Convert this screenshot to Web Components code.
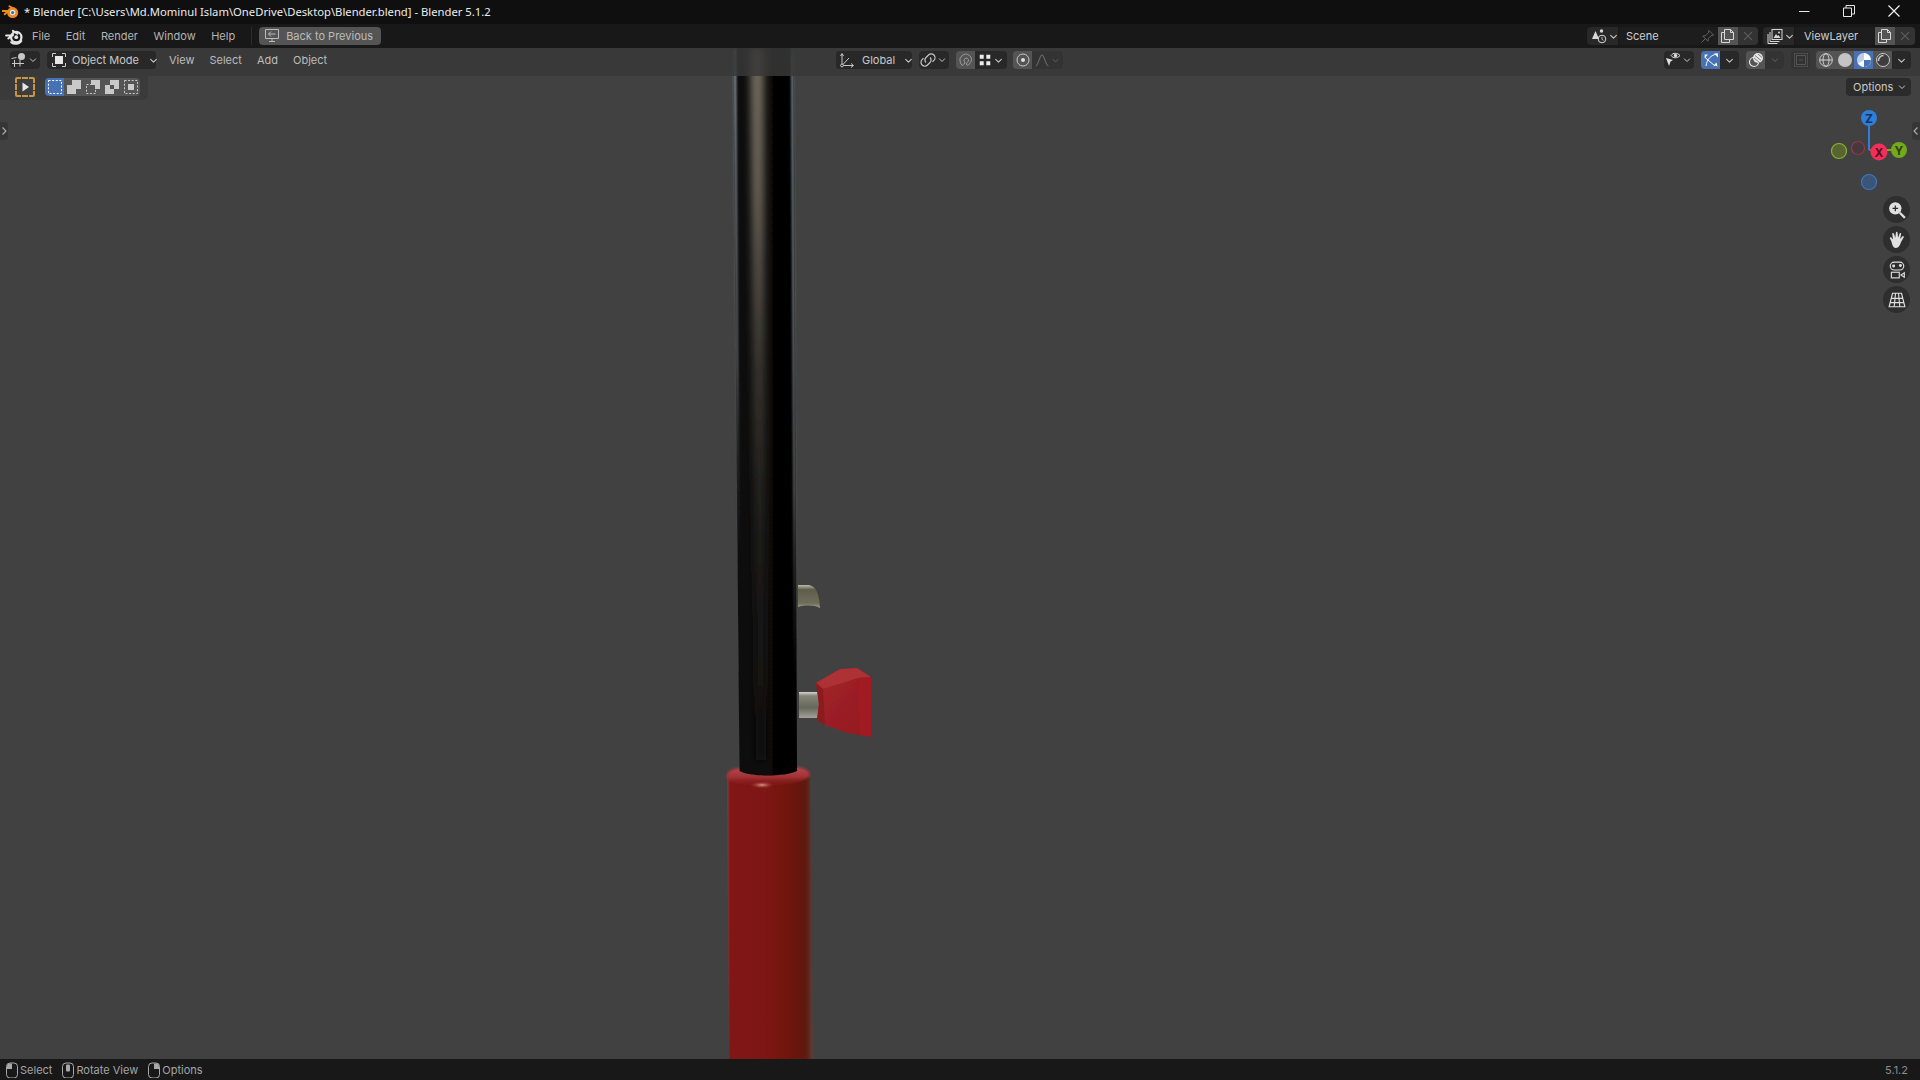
<!DOCTYPE html>
<html>
<head>
<meta charset="utf-8">
<title>Blender</title>
<style>
html, body { margin: 0; height: 100%; background: #181818; overflow: hidden; }
</style>
</head>
<body>
<bl-app>
  <bl-titlebar slot="title">* Blender [C:\Users\Md.Mominul Islam\OneDrive\Desktop\Blender.blend] - Blender 5.1.2</bl-titlebar>
  <bl-topbar slot="top"></bl-topbar>
  <bl-viewport slot="view"></bl-viewport>
  <bl-statusbar slot="status"></bl-statusbar>
</bl-app>
<script>
const chev = '<path d="M4.500 6.500 8 10l3.500-3.500" fill="none" stroke="currentColor" stroke-width="1.300" stroke-linecap="round" stroke-linejoin="round"/>';
const ICONS = {
  chev,
  logo: '<circle cx="10" cy="9" r="4.600" fill="none" stroke="currentColor" stroke-width="2"/><circle cx="10" cy="9" r="1.700" fill="currentColor"/><path d="M1 7.500h6M3 10.200l4-3.400M7 3.500l4 2.400M5.500 13.500c2 2 7 2.200 9-1" fill="none" stroke="currentColor" stroke-width="1.800" stroke-linecap="round"/>',
  logoOrange: '<circle cx="10" cy="9" r="5.200" fill="#f08a1d"/><circle cx="10" cy="9" r="2.600" fill="#e8e8e8"/><circle cx="10" cy="9" r="1.500" fill="#3a6ea8"/><path d="M.5 7.500h6M2.500 10.500l4-3.500M7 3l4 2.500" fill="none" stroke="#f08a1d" stroke-width="1.800" stroke-linecap="round"/>',
  back: '<path d="M1.500 1.500h13v9h-13zM8 10.500v3M5 13.500h6" fill="none" stroke="currentColor"/><path d="M11.500 6H4.500M7 3.500 4.500 6 7 8.500" fill="none" stroke="currentColor"/>',
  editor: '<path d="M1 11.500h12M3.500 8v7M9 7.500v7M.5 6.500l5-1" fill="none" stroke="currentColor"/><circle cx="10.500" cy="4.500" r="3.500" fill="currentColor"/>',
  mode: '<path d="M1.500 5V1.500H5M11 1.500h3.500V5M14.500 11v3.500H11M5 14.500H1.500V11" fill="none" stroke="currentColor"/><rect x="4" y="4" width="8" height="8" fill="#e6e6e6"/>',
  pointer: '<path d="M5.500 3.500v9L12 8z" fill="#e6e6e6"/>',
  orient: '<path d="M3 2v11.500M3 13.500 14 13.500M3 13.500 10 6" fill="none" stroke="currentColor"/><path d="M1.500 4 3 1.500 4.500 4M12 11.500l2.500 2-2.500 2" fill="none" stroke="currentColor"/><circle cx="3" cy="13.500" r="1.400" fill="#282828" stroke="currentColor"/>',
  link: '<path d="M6 10.500a3.400 3.400 0 0 1 0-5L8.500 3a3.800 3.800 0 0 1 5.400 5.400l-1.400 1.400M10 5.500a3.400 3.400 0 0 1 0 5L7.500 13a3.800 3.800 0 0 1-5.400-5.400l1.400-1.400" fill="none" stroke="currentColor" stroke-width="1.200"/>',
  magnet: '<path d="M4 13.500 2.500 11a6 6 0 0 1 9-7.500 5 5 0 0 1 1 7l-2.500 3-2-1.500 2.300-2.800A2.200 2.200 0 0 0 7 6.500a2.500 2.500 0 0 0-.6 3.300L7 11z" fill="none" stroke="#9a9a9a" stroke-width="1"/>',
  grid: '<path d="M2 2h4.500v4.500H2zM9.500 2H14v4.500H9.500zM2 9.500h4.500V14H2zM9.500 9.500H14V14H9.500z" fill="currentColor"/>',
  prop: '<circle cx="8" cy="8" r="6" fill="none" stroke="#c8c8c8"/><circle cx="8" cy="8" r="2" fill="#e0e0e0"/>',
  falloff: '<path d="M1.500 14c3 0 4-11 6.500-11s3.500 11 6.500 11" fill="none" stroke="#6a6a6a" stroke-width="1.100"/>',
  sceneIcon: '<path d="M1 11 4.500 3 8 11z" fill="#d8d8d8"/><circle cx="10.500" cy="3" r="1.700" fill="#d8d8d8"/><circle cx="11" cy="11" r="3.800" fill="#2a2a2a" stroke="#d8d8d8"/><path d="M11 9v2.300l1.500 1" fill="none" stroke="#d8d8d8" stroke-width=".8"/>',
  pin: '<path d="M9.500 1.500l5 5-2.500.5-3 3-.5 3L3 7.500l3-.5 3-3zM5.500 10.500 1.500 14.500" fill="none" stroke="#666" />',
  copy: '<path d="M4.500 4.500H1.500v10h8v-3M4.500 1.500h6l3 3v7h-9z" fill="none" stroke="#d8d8d8"/><path d="M10.500 1.500v3h3" fill="none" stroke="#d8d8d8"/>',
  x: '<path d="M3.500 3.500l9 9M12.500 3.500l-9 9" fill="none" stroke="#5e5e5e" stroke-width="1.300"/>',
  layers: '<rect x="5" y="1.500" width="10" height="10" fill="#2a2a2a" stroke="#d8d8d8"/><path d="M3 4v9.500h9.500M1 6v9.500h9.500" fill="none" stroke="#d8d8d8"/><path d="M6.500 10 9 6l1.500 2 1-1 2 3z" fill="#d8d8d8"/><circle cx="12" cy="4.500" r="1" fill="#d8d8d8"/>',
  eye: '<path d="M6 3.500C8 .5 12.500 .5 15 3.500 12.500 6.500 8 6.500 6 3.500z" fill="none" stroke="#e0e0e0"/><circle cx="10.500" cy="3.500" r="1.700" fill="#e0e0e0"/><path d="M1 6l7 2-2.500 1.500L4 14z" fill="#e0e0e0"/>',
  gizmoView: '<path d="M3 14C4 7 8 3 14 2" fill="none" stroke="#fff" stroke-width="1"/><path d="M1.500 5 12 14" fill="none" stroke="#fff"/><path d="M1.500 2.500 5 2.500 2 6zM14.500 14.500l-1-4-2.500 2.500z M11 1.500h4v4z" fill="#fff"/>',
  overlay: '<circle cx="6" cy="10" r="4.500" fill="none" stroke="#e6e6e6" stroke-width="1.200"/><circle cx="10" cy="6" r="5" fill="#e6e6e6"/><path d="M7 3.500l6 5M6 6l6 5M10 2l4 3.500" stroke="#666" stroke-width=".8"/>',
  xray: '<rect x="3.500" y="3.500" width="9" height="9" fill="none" stroke="#555"/><rect x="1.500" y="1.500" width="13" height="13" fill="none" stroke="#4c4c4c"/><path d="M6 8h4" stroke="#555"/>',
  wire: '<circle cx="8" cy="8" r="6.300" fill="none" stroke="#d0d0d0"/><ellipse cx="8" cy="8" rx="3" ry="6.300" fill="none" stroke="#d0d0d0"/><path d="M1.700 8h12.600" stroke="#d0d0d0"/>',
  solid: '<circle cx="8" cy="8" r="7" fill="#c4c4c4"/>',
  matprev: '<circle cx="8" cy="8" r="7" fill="#fff"/><path d="M8 8v7a7 7 0 0 0 6-3.500zM8 8l6 3.500A7 7 0 0 0 15 8z" fill="#4772b3"/><path d="M8 1a7 7 0 0 0-6 10.500L8 8z" fill="#4772b3" opacity=".35"/>',
  rendered: '<circle cx="8" cy="8" r="6.500" fill="#3d3d3d" stroke="#c8c8c8"/><path d="M3.500 9a5 5 0 0 1 5-5.500" fill="none" stroke="#c8c8c8" stroke-width="1.500"/>',
  zoom: '<circle cx="6.500" cy="6.500" r="5.500" fill="#e0e0e0"/><path d="M10.500 10.500l4.500 4.500" stroke="#e0e0e0" stroke-width="2"/><path d="M4 6.500h5M6.500 4v5" stroke="#2b2b2b" stroke-width="1.100"/>',
  hand: '<path d="M3 9 1.800 6.800c-.6-1 .6-1.700 1.300-.9L4.500 7.500 3.800 2.800c-.2-1.100 1.200-1.300 1.500-.3L6.500 6 7 1.500c.1-1 1.500-1 1.500 0L9 6l1.300-3.700c.3-1 1.700-.6 1.400.4L10.700 7l2-2.200c.7-.8 1.800.1 1.200 1L11.500 10c-1 3-2 5-4.500 5S3.700 12 3 9z" fill="#e0e0e0"/>',
  camera: '<rect x="2" y="1" width="12" height="7" rx="3.500" fill="none" stroke="#e0e0e0"/><circle cx="5" cy="4.500" r="1.300" fill="#e0e0e0"/><circle cx="11" cy="4" r="1.300" fill="#e0e0e0"/><rect x="3" y="10" width="7" height="5" fill="none" stroke="#e0e0e0"/><path d="M14.500 10.500v4L11.500 12.500z" fill="none" stroke="#e0e0e0"/>',
  persp: '<path d="M4 2h8l3 12H1zM6.700 2 5.500 14M9.300 2l1.200 12M3 6.500h10M2 10.300h12" fill="none" stroke="#e0e0e0"/>',
  mouseL: '<rect x="2.500" y="1" width="11" height="15" rx="3.500" fill="none" stroke="#a8a8a8"/><path d="M3 4.500A3 3 0 0 1 6 1.500h2V7H3z" fill="#a8a8a8"/>',
  mouseM: '<rect x="2.500" y="1" width="11" height="15" rx="3.500" fill="none" stroke="#a8a8a8"/><rect x="6" y="2.500" width="4" height="7" rx="1" fill="#a8a8a8"/>',
  mouseR: '<rect x="2.500" y="1" width="11" height="15" rx="3.500" fill="none" stroke="#a8a8a8"/><path d="M13 4.500a3 3 0 0 0-3-3H8V7h5z" fill="#a8a8a8"/>',
  selSet: '<rect x="1.500" y="1.500" width="13" height="13" fill="#4772b3" stroke="#fff" stroke-dasharray="2 1.600"/>',
  selExt: '<path d="M6 1h9v9h-5v5H1V6h5z" fill="#c9c9c9"/>',
  selSub: '<rect x="1.500" y="5.500" width="9" height="9" fill="none" stroke="#c9c9c9" stroke-dasharray="2 1.600"/><path d="M6 1h9v9h-5V6H6z" fill="#c9c9c9"/>',
  selDiff: '<path d="M6 1h9v9h-5V6H6zM1 6h5v4h4v5H1z" fill="#c9c9c9"/>',
  selAnd: '<rect x="1.500" y="1.500" width="13" height="13" fill="none" stroke="#c9c9c9" stroke-dasharray="2 1.600"/><rect x="5" y="5" width="6" height="6" fill="#c9c9c9"/>'
};

// small helper so each element has its own shadow root and style
function shadow(el, html) {
  el.attachShadow({mode: 'open'}).innerHTML = html;
}

class BlIcon extends HTMLElement {
  connectedCallback() {
    const s = this.getAttribute('size') || 16;
    shadow(this, `<style>:host{display:inline-flex;flex:none;line-height:0}</style>
      <svg width="${s}" height="${s}" viewBox="0 0 16 16">${ICONS[this.getAttribute('name')] || ''}</svg>`);
  }
}
customElements.define('bl-icon', BlIcon);

// rounded control, tone picks the fill
class BlSeg extends HTMLElement {
  constructor() {
    super();
    shadow(this, `<style>
      :host { display:inline-flex; align-items:center; height:18px; box-sizing:border-box; flex:none; border-radius:4px;
        background:#282828; color:#c8c8c8; font:11px Inter, "Liberation Sans", sans-serif; }
      :host([tone=mid]) { background:#545454; }
      :host([tone=flat]) { background:#393939; }
      :host([tone=blue]) { background:#4772b3; color:#fff; }
      :host([tone=dim]) { background:#333; color:#666; }
      :host([l]) { border-radius:4px 0 0 4px; }
      :host([r]) { border-radius:0 4px 4px 0; }
      :host([m]) { border-radius:0; }
    </style><slot></slot>`);
  }
}
customElements.define('bl-seg', BlSeg);

class BlTitlebar extends HTMLElement {
  constructor() {
    super();
    shadow(this, `<style>
      :host { display:flex; align-items:center; height:24px; padding-bottom:2px; box-sizing:border-box; background:#0f0f0f; color:#ececec;
        font:11.250px "Noto Sans", "Open Sans", sans-serif; white-space:nowrap; }
      .ic { margin:0 5px 0 2px; }
      .win { margin-left:auto; display:flex; align-items:center; }
      .win svg { display:block; }
      .win span { display:flex; width:45px; justify-content:center; }
    </style>
    <bl-icon class="ic" name="logoOrange" size="17"></bl-icon><slot></slot>
    <div class="win">
      <span><svg width="12" height="12"><path d="M1 6.500h10.500" stroke="#e8e8e8"/></svg></span>
      <span><svg width="12" height="12"><path d="M.5 3h8v8.500h-8zM3 3V.5h8.500V9H8.500" fill="none" stroke="#e8e8e8"/></svg></span>
      <span style="margin-right:4px"><svg width="12" height="12"><path d="M.5 .5l11 11M11.500 .5l-11 11" stroke="#f0f0f0" stroke-width="1.200"/></svg></span>
    </div>`);
  }
}
customElements.define('bl-titlebar', BlTitlebar);

class BlTopbar extends HTMLElement {
  constructor() {
    super();
    shadow(this, `<style>
      :host { display:flex; align-items:center; height:24px; background:#181818; color:#b4b4b4;
        font:11px Inter, "Liberation Sans", sans-serif; white-space:nowrap; }
      .logo { margin:0 9px 0 5px; color:#e6e6e6; }
      .menu { display:flex; gap:15.500px; }
      .sep { width:1px; height:18px; background:#2c2c2c; margin:0 7px 0 16px; }
      .back { padding:0 9px 0 5px; gap:6px; width:122px; box-sizing:border-box; color:#bcbcbc; }
      .right { margin-left:auto; display:flex; margin-right:5px; }
      .txt { padding-left:7px; box-sizing:border-box; justify-content:space-between; }
      .ico { padding-left:4px; box-sizing:border-box; }
      .ctr { justify-content:center; }
    </style>
    <bl-icon class="logo" name="logo" size="18"></bl-icon>
    <div class="menu"><span>File</span><span>Edit</span><span>Render</span><span>Window</span><span>Help</span></div>
    <div class="sep"></div>
    <bl-seg class="back" tone="mid"><bl-icon name="back"></bl-icon><span>Back to Previous</span></bl-seg>
    <div class="right">
      <bl-seg l class="ico" style="width:31px"><bl-icon name="sceneIcon" size="16"></bl-icon><bl-icon name="chev" size="13"></bl-icon></bl-seg>
      <bl-seg m class="txt" style="width:99px;background:#1d1d1d;margin-left:1px;color:#cfcfcf"><span>Scene</span><bl-icon name="pin" size="15" style="margin-right:3px"></bl-icon></bl-seg>
      <bl-seg m tone="mid" class="ctr" style="width:20px"><bl-icon name="copy"></bl-icon></bl-seg>
      <bl-seg r class="ctr" style="width:20px;background:#333;margin-right:5px"><bl-icon name="x" size="14"></bl-icon></bl-seg>
      <bl-seg l class="ico" style="width:31px"><bl-icon name="layers"></bl-icon><bl-icon name="chev" size="13"></bl-icon></bl-seg>
      <bl-seg m class="txt" style="width:80px;background:#1d1d1d;margin-left:1px;color:#cfcfcf;padding-left:9px"><span>ViewLayer</span></bl-seg>
      <bl-seg m tone="mid" class="ctr" style="width:20px"><bl-icon name="copy"></bl-icon></bl-seg>
      <bl-seg r class="ctr" style="width:20px;background:#333"><bl-icon name="x" size="14"></bl-icon></bl-seg>
    </div>`);
  }
}
customElements.define('bl-topbar', BlTopbar);

class BlHeader extends HTMLElement {
  constructor() {
    super();
    shadow(this, `<style>
      :host { display:flex; align-items:center; height:28px; box-sizing:border-box; padding:0 9px 4px 10px;
        background:rgba(56,56,56,.86); color:#bcbcbc; font:11px Inter, "Liberation Sans", sans-serif; white-space:nowrap; }
      .left { flex:0 0 826px; display:flex; align-items:center; }
      .menu { display:flex; gap:15px; margin-left:13px; }
      .mid { display:flex; align-items:center; }
      .right { margin-left:auto; display:flex; align-items:center; }
      .ctr { justify-content:center; }
    </style>
    <div class="left">
      <bl-seg class="ctr" style="width:30px"><bl-icon name="editor"></bl-icon><bl-icon name="chev" size="12"></bl-icon></bl-seg>
      <bl-seg style="width:109px;margin-left:7px;padding-left:4px;box-sizing:border-box">
        <bl-icon name="mode"></bl-icon><span style="margin:0 8px 0 5px">Object Mode</span><bl-icon name="chev" size="13"></bl-icon></bl-seg>
      <div class="menu"><span>View</span><span>Select</span><span>Add</span><span>Object</span></div>
    </div>
    <div class="mid">
      <bl-seg style="width:76px;padding-left:3px;box-sizing:border-box"><bl-icon name="orient"></bl-icon><span style="margin:0 7px 0 7px">Global</span><bl-icon name="chev" size="13"></bl-icon></bl-seg>
      <bl-seg class="ctr" style="width:30px;margin-left:7px"><bl-icon name="link"></bl-icon><bl-icon name="chev" size="12"></bl-icon></bl-seg>
      <bl-seg l tone="mid" class="ctr" style="width:19px;margin-left:7px"><bl-icon name="magnet"></bl-icon></bl-seg>
      <bl-seg r class="ctr" style="width:32px"><bl-icon name="grid" size="14" style="color:#eee"></bl-icon><bl-icon name="chev" size="13"></bl-icon></bl-seg>
      <bl-seg l tone="mid" class="ctr" style="width:19px;margin-left:6px"><bl-icon name="prop"></bl-icon></bl-seg>
      <bl-seg r tone="dim" class="ctr" style="width:31px"><bl-icon name="falloff"></bl-icon><bl-icon name="chev" size="11"></bl-icon></bl-seg>
    </div>
    <div class="right">
      <bl-seg class="ctr" style="width:30px"><bl-icon name="eye"></bl-icon><bl-icon name="chev" size="12"></bl-icon></bl-seg>
      <bl-seg l tone="blue" class="ctr" style="width:19px;margin-left:7px"><bl-icon name="gizmoView"></bl-icon></bl-seg>
      <bl-seg r class="ctr" style="width:19px"><bl-icon name="chev" size="13"></bl-icon></bl-seg>
      <bl-seg l tone="mid" class="ctr" style="width:19px;margin-left:7px"><bl-icon name="overlay"></bl-icon></bl-seg>
      <bl-seg r tone="dim" class="ctr" style="width:19px"><bl-icon name="chev" size="12"></bl-icon></bl-seg>
      <bl-seg tone="dim" class="ctr" style="width:19px;margin-left:7px"><bl-icon name="xray"></bl-icon></bl-seg>
      <bl-seg l tone="mid" class="ctr" style="width:19px;margin-left:6px"><bl-icon name="wire"></bl-icon></bl-seg>
      <bl-seg m tone="mid" class="ctr" style="width:19px"><bl-icon name="solid"></bl-icon></bl-seg>
      <bl-seg m tone="blue" class="ctr" style="width:19px"><bl-icon name="matprev"></bl-icon></bl-seg>
      <bl-seg m tone="mid" class="ctr" style="width:19px"><bl-icon name="rendered"></bl-icon></bl-seg>
      <bl-seg r class="ctr" style="width:19px"><bl-icon name="chev" size="13"></bl-icon></bl-seg>
    </div>`);
  }
}
customElements.define('bl-header', BlHeader);

class BlToolrow extends HTMLElement {
  constructor() {
    super();
    shadow(this, `<style>
      :host { display:flex; align-items:flex-start; height:24px; color:#d0d0d0; font:11px Inter, "Liberation Sans", sans-serif; }
      .panel { display:flex; align-items:center; width:148px; height:24px; box-sizing:border-box; padding:0 0 2px 15px;
        background:#3a3a3a; border-radius:0 0 5px 0; }
      .tool { display:flex; align-items:center; justify-content:center; width:20px; height:20px; box-sizing:border-box;
        border:2px dashed #c9953f; border-radius:2px; background:#3d3d3d; margin-right:10px; }
      .ctr { justify-content:center; }
      .opt { margin:2px 9px 0 auto; width:65px; padding-left:7px; box-sizing:border-box; gap:3px; }
    </style>
    <div class="panel">
      <div class="tool"><bl-icon name="pointer" size="16"></bl-icon></div>
      <bl-seg l tone="blue" class="ctr" style="width:19px"><bl-icon name="selSet"></bl-icon></bl-seg>
      <bl-seg m tone="mid" class="ctr" style="width:19px"><bl-icon name="selExt"></bl-icon></bl-seg>
      <bl-seg m tone="mid" class="ctr" style="width:19px"><bl-icon name="selSub"></bl-icon></bl-seg>
      <bl-seg m tone="mid" class="ctr" style="width:19px"><bl-icon name="selDiff"></bl-icon></bl-seg>
      <bl-seg r tone="mid" class="ctr" style="width:19px"><bl-icon name="selAnd"></bl-icon></bl-seg>
    </div>
    <bl-seg class="opt" tone="flat" style="background:#2b2b2b"><span>Options</span><bl-icon name="chev" size="12"></bl-icon></bl-seg>`);
  }
}
customElements.define('bl-toolrow', BlToolrow);

// the 3D object, drawn on the free canvas of the viewport
class BlScene extends HTMLElement {
  constructor() {
    super();
    shadow(this, `<style>:host{position:absolute;inset:0;display:block} svg{display:block}</style>
    <svg width="1920" height="1011" viewBox="0 48 1920 1011">
      <defs>
        <linearGradient id="shaft" x1="0" x2="1" y1="0" y2="0">
          <stop offset="0" stop-color="#121212"/><stop offset=".45" stop-color="#0d0c0b"/><stop offset=".75" stop-color="#020202"/><stop offset="1" stop-color="#030303"/>
        </linearGradient>
        <linearGradient id="fade" gradientUnits="userSpaceOnUse" x1="0" x2="0" y1="48" y2="760">
          <stop offset="0" stop-color="#6f685c"/><stop offset=".2" stop-color="#615b51"/><stop offset=".45" stop-color="#37332e"/><stop offset=".7" stop-color="#1d1b18"/><stop offset="1" stop-color="#0e0d0c"/>
        </linearGradient>
        <linearGradient id="edgeL" gradientUnits="userSpaceOnUse" x1="0" x2="0" y1="48" y2="560">
          <stop offset="0" stop-color="#8d97a4"/><stop offset=".3" stop-color="#6d747c"/><stop offset=".62" stop-color="#5a5d60"/><stop offset="1" stop-color="#414141" stop-opacity="0"/>
        </linearGradient>
        <linearGradient id="edgeR" gradientUnits="userSpaceOnUse" x1="0" x2="0" y1="48" y2="680">
          <stop offset="0" stop-color="#76868f"/><stop offset=".4" stop-color="#6c7278"/><stop offset=".7" stop-color="#595c5c"/><stop offset="1" stop-color="#414141" stop-opacity="0"/>
        </linearGradient>
        <linearGradient id="tube" x1="0" x2="1" y1="0" y2="0">
          <stop offset="0" stop-color="#714040"/><stop offset=".04" stop-color="#801616"/><stop offset=".4" stop-color="#7f1312"/>
          <stop offset=".62" stop-color="#751511"/><stop offset=".92" stop-color="#5e1a10"/><stop offset="1" stop-color="#5a4038"/>
        </linearGradient>
        <linearGradient id="rim" x1="0" x2="0" y1="0" y2="1">
          <stop offset="0" stop-color="#b04a50"/><stop offset=".5" stop-color="#a53338"/><stop offset="1" stop-color="#851616" stop-opacity="0"/>
        </linearGradient>
        <linearGradient id="pin" x1="0" x2="0" y1="0" y2="1">
          <stop offset="0" stop-color="#d4d4ce"/><stop offset=".15" stop-color="#85857a"/><stop offset=".6" stop-color="#66675b"/><stop offset="1" stop-color="#a2a298"/>
        </linearGradient>
        <linearGradient id="hook" x1="0" x2="0" y1="0" y2="1">
          <stop offset="0" stop-color="#bdb9ac"/><stop offset=".2" stop-color="#5f5d4c"/><stop offset=".8" stop-color="#6e6e5a"/><stop offset="1" stop-color="#a8a894"/>
        </linearGradient>
        <linearGradient id="block" x1="0" x2="1" y1="0" y2="1">
          <stop offset="0" stop-color="#a2232a"/><stop offset="1" stop-color="#931b20"/>
        </linearGradient>
        <radialGradient id="spec" cx=".5" cy=".5" r=".5">
          <stop offset="0" stop-color="#dc9a80"/><stop offset="1" stop-color="#a03030" stop-opacity="0"/>
        </radialGradient>
        <filter id="b1" x="-100%" y="-5%" width="300%" height="110%"><feGaussianBlur stdDeviation=".9"/></filter>
        <filter id="b3" x="-100%" y="-5%" width="300%" height="110%"><feGaussianBlur stdDeviation="3.500"/></filter>
        <filter id="b05" x="-5%" y="-5%" width="110%" height="110%"><feGaussianBlur stdDeviation=".6"/></filter>
      </defs>
      <path d="M727 776C727 771 732 769 738 768L798 767C806 768 810 771 810 776L813 1059H729z" fill="url(#tube)" filter="url(#b05)"/>
      <path d="M727 776C727 771 732 769 738 768L798 767C806 768 810 771 810 776C796 788 745 790 727 780z" fill="url(#rim)" filter="url(#b1)"/>
      <ellipse cx="762" cy="785" rx="12" ry="3.500" fill="url(#spec)"/>
      <path d="M733 48H794L797 771C785 777 750 777 739.500 771z" fill="url(#shaft)" filter="url(#b05)"/>
      <polygon points="750,48 764,48 766,760 756,760" fill="url(#fade)" filter="url(#b3)"/>
      <polygon points="733.500,48 736,48 739.500,560 737.500,560" fill="url(#edgeL)" filter="url(#b1)"/>
      <polygon points="791,48 793.500,48 796.500,680 794,680" fill="url(#edgeR)" filter="url(#b1)"/>
      <path d="M798 585h9c8 0 12 6 13 23-6-3-14-3-22-1z" fill="url(#hook)" filter="url(#b05)"/>
      <rect x="799" y="692" width="25" height="26" fill="url(#pin)" filter="url(#b05)"/>
      <path d="M816 683 840 669 857 668 871 677 871 737 847 733 825 725 817 720 819 704z" fill="url(#block)" filter="url(#b05)"/>
      <path d="M816 683 840 669 857 668 871 677 858 678 823 689z" fill="#ad3036" filter="url(#b05)"/>
      <path d="M858 678 871 677 871 737 860 735z" fill="#a11b20" filter="url(#b05)"/>
      <path d="M816 683 823 689 825 725 817 720 819 704z" fill="#8c1a1e" filter="url(#b05)"/>
    </svg>`);
  }
}
customElements.define('bl-scene', BlScene);

class BlGizmo extends HTMLElement {
  constructor() {
    super();
    shadow(this, `<style>:host{position:absolute;left:1820px;top:50px;display:block} svg{display:block}
      text{font:bold 12px Inter,"Liberation Sans",sans-serif;text-anchor:middle}</style>
    <svg width="100" height="100" viewBox="1820 98 100 100">
      <circle cx="1869" cy="182" r="7.500" fill="#3a5578" stroke="#3c78c0" stroke-width="1.200"/>
      <circle cx="1839" cy="151" r="7.500" fill="#58652f" stroke="#8ab32f" stroke-width="1.200"/>
      <circle cx="1858" cy="148" r="6.500" fill="#47383c" stroke="#93394f" stroke-width="1.200"/>
      <path d="M1869 118v32" stroke="#2f7fd8" stroke-width="2"/>
      <path d="M1869 150h10" stroke="#ef3158" stroke-width="2"/>
      <path d="M1879 150h20" stroke="#74a81d" stroke-width="2"/>
      <circle cx="1869" cy="118" r="8" fill="#2f7fd8"/><text x="1869" y="122.500" fill="#12325a">Z</text>
      <circle cx="1899" cy="150" r="8" fill="#74a81d"/><text x="1899" y="154.500" fill="#2c4208">Y</text>
      <circle cx="1879" cy="152" r="8.500" fill="#f02f5a"/><text x="1879" y="156.500" fill="#5c0d20">X</text>
    </svg>`);
  }
}
customElements.define('bl-gizmo', BlGizmo);

class BlNav extends HTMLElement {
  constructor() {
    super();
    shadow(this, `<style>
      :host { position:absolute; left:1883px; top:148px; display:flex; flex-direction:column; gap:3px; }
      .b { display:flex; width:27px; height:27px; border-radius:50%; background:#2e2e2e; align-items:center; justify-content:center; }
    </style>
    <div class="b"><bl-icon name="zoom" size="18"></bl-icon></div>
    <div class="b"><bl-icon name="hand" size="18"></bl-icon></div>
    <div class="b"><bl-icon name="camera" size="18"></bl-icon></div>
    <div class="b"><bl-icon name="persp" size="18"></bl-icon></div>`);
  }
}
customElements.define('bl-nav', BlNav);

class BlSideTab extends HTMLElement {
  constructor() {
    super();
    shadow(this, `<style>
      :host { position:absolute; top:74px; display:flex; width:8px; height:18px; background:#363636; align-items:center; justify-content:center; }
      :host([side=l]) { left:0; border-radius:0 3px 3px 0; }
      :host([side=r]) { right:0; border-radius:3px 0 0 3px; }
    </style><svg width="6" height="10"><path d="${this.getAttribute('side') === 'l' ? 'M1.500 1.500 5 5 1.500 8.500' : 'M4.500 1.500 1 5 4.500 8.500'}" fill="none" stroke="#b0b0b0" stroke-width="1.100"/></svg>`);
  }
}
customElements.define('bl-sidetab', BlSideTab);

class BlViewport extends HTMLElement {
  constructor() {
    super();
    shadow(this, `<style>
      :host { display:block; position:relative; overflow:hidden; background:#414141; }
      .chrome { position:relative; display:flex; flex-direction:column; }
    </style>
    <bl-scene></bl-scene>
    <div class="chrome"><bl-header></bl-header><bl-toolrow></bl-toolrow></div>
    <bl-sidetab side="l"></bl-sidetab>
    <bl-sidetab side="r"></bl-sidetab>
    <bl-gizmo></bl-gizmo>
    <bl-nav></bl-nav>`);
  }
}
customElements.define('bl-viewport', BlViewport);

class BlStatusbar extends HTMLElement {
  constructor() {
    super();
    shadow(this, `<style>
      :host { display:flex; align-items:center; height:21px; padding:0 12px 0 4px; background:#181818; color:#a4a4a4;
        font:11px Inter, "Liberation Sans", sans-serif; white-space:nowrap; }
      .k { display:flex; align-items:center; gap:0; margin-right:8px; }
      .v { margin-left:auto; color:#8c8c8c; }
    </style>
    <div class="k"><bl-icon name="mouseL" size="16"></bl-icon><span>Select</span></div>
    <div class="k"><bl-icon name="mouseM" size="16"></bl-icon><span>Rotate View</span></div>
    <div class="k"><bl-icon name="mouseR" size="16"></bl-icon><span>Options</span></div>
    <span class="v">5.1.2</span>`);
  }
}
customElements.define('bl-statusbar', BlStatusbar);

class BlApp extends HTMLElement {
  constructor() {
    super();
    shadow(this, `<style>
      :host { display:grid; grid-template-rows:24px 24px 1fr 21px; width:1920px; height:1080px; }
    </style>
    <slot name="title"></slot><slot name="top"></slot><slot name="view"></slot><slot name="status"></slot>`);
  }
}
customElements.define('bl-app', BlApp);
</script>
</body>
</html>
